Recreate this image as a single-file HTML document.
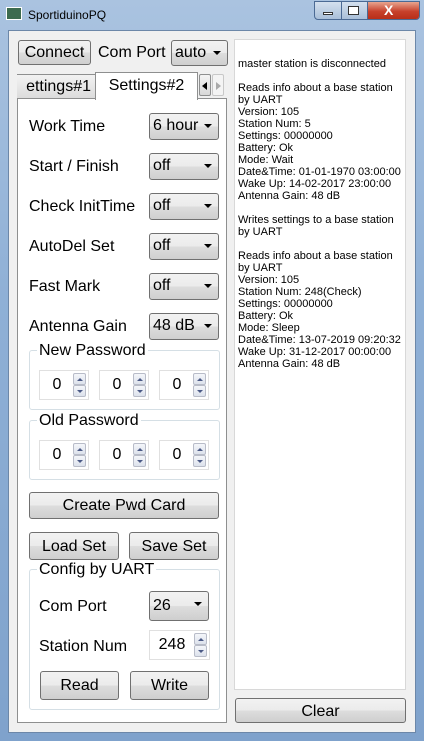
<!DOCTYPE html>
<html><head><style>
*{box-sizing:border-box;margin:0;padding:0}
body{width:424px;height:741px;position:relative;overflow:hidden;font-family:"Liberation Sans",sans-serif;background:linear-gradient(#aac3e0,#8fb0d6 40%,#7fa2cc);}
.a{position:absolute}
.client{left:8px;top:30px;width:408px;height:703px;background:#f0f0f0;border:1px solid #6c87a8}
.btn{position:absolute;border:1px solid #707070;border-radius:3px;background:linear-gradient(#f2f2f2 0,#ebebeb 50%,#dddddd 51%,#cfcfcf);font-size:16px;text-align:center;color:#000}
.lbl{position:absolute;font-size:16px;color:#000}
.cb{position:absolute;border:1px solid #707070;border-radius:3px;background:linear-gradient(#f2f2f2 0,#ebebeb 50%,#dddddd 51%,#cfcfcf);font-size:16px;padding-left:3px;line-height:24px}
.cb:after{content:"";position:absolute;right:6px;top:10px;border-left:4px solid transparent;border-right:4px solid transparent;border-top:4px solid #000}
.grp{position:absolute;border:1px solid #d5dfe5;border-radius:3px}
.gt{position:absolute;font-size:16px;background:#fff;padding:0 2px}
.sp{position:absolute;width:50px;height:30px;background:#fff;border:1px solid #e0e0e0;font-size:16px}
.sp span{position:absolute;left:0;width:34px;text-align:center;top:5px}
.sp i{position:absolute;right:2px;width:13px;height:12px;border:1px solid #b8bcc8;background:linear-gradient(#f4f6fa,#dde2ec);border-radius:2px}
.sp i:after{content:"";position:absolute;left:3px;top:4px;border-left:3px solid transparent;border-right:3px solid transparent}
.sp i.u{top:2px}.sp i.u:after{border-bottom:3px solid #4b5a86}
.sp i.d{top:14px}.sp i.d:after{border-top:3px solid #4b5a86}
.log{font-size:11px;line-height:12px;color:#000;white-space:pre}
</style></head><body>
<div class="a" style="left:6px;top:7px;width:16px;height:13px;background:#3d6b4f;border:1px solid #fff"></div>
<div class="a" style="left:28px;top:8px;font-size:12px;color:#000">SportiduinoPQ</div>
<div class="a" style="left:314px;top:1px;width:106px;height:19px;border:1px solid #4b6a94;border-radius:0 0 4px 4px;background:linear-gradient(#d4e0ee,#a9bfd9);overflow:hidden">
<div class="a" style="left:26px;top:0;width:1px;height:19px;background:#4b6a94"></div>
<div class="a" style="left:52px;top:0;width:1px;height:19px;background:#4b6a94"></div>
<div class="a" style="left:53px;top:0;width:53px;height:19px;background:linear-gradient(#e8a58f,#c7402b 50%,#b42a14)"></div>
<div class="a" style="left:8px;top:10px;width:10px;height:3px;background:#fff;border:1px solid #333"></div>
<div class="a" style="left:33px;top:4px;width:11px;height:9px;border:1px solid #333;background:#fff"></div>
<div class="a" style="left:69px;top:0px;color:#fff;font-weight:bold;font-size:14px">X</div>
</div>
<div class="a client"></div>

<div class="btn" style="left:18px;top:40px;width:73px;height:25px;line-height:23px">Connect</div>
<div class="lbl" style="left:98px;top:44px">Com Port</div>
<div class="cb" style="left:171px;top:40px;width:57px;height:26px">auto</div>

<div class="a" style="left:234px;top:39px;width:172px;height:651px;background:#fff;border:1px solid #d8d8d8"></div>
<div class="a log" style="left:238px;top:58px">master station is disconnected

Reads info about a base station
by UART
Version: 105
Station Num: 5
Settings: 00000000
Battery: Ok
Mode: Wait
Date&amp;Time: 01-01-1970 03:00:00
Wake Up: 14-02-2017 23:00:00
Antenna Gain: 48 dB

Writes settings to a base station
by UART

Reads info about a base station
by UART
Version: 105
Station Num: 248(Check)
Settings: 00000000
Battery: Ok
Mode: Sleep
Date&amp;Time: 13-07-2019 09:20:32
Wake Up: 31-12-2017 00:00:00
Antenna Gain: 48 dB</div>
<div class="btn" style="left:235px;top:698px;width:171px;height:25px;line-height:25px">Clear</div>

<!-- tabs -->
<div class="a" style="left:17px;top:98px;width:210px;height:625px;background:#fff;border:1px solid #8e8f8f"></div>
<div class="a" style="left:17px;top:74px;width:79px;height:25px;border:1px solid #8e8f8f;border-left:none;background:linear-gradient(#f2f2f2,#dcdcdc);font-size:16px;line-height:24px;overflow:hidden;text-align:right;padding-right:4px">ettings#1</div>
<div class="a" style="left:95px;top:72px;width:103px;height:28px;border:1px solid #8e8f8f;border-bottom:none;background:#fff;font-size:16px;text-align:center;line-height:26px">Settings#2</div>
<div class="a" style="left:199px;top:74px;width:12px;height:22px;border:1px solid #8e8f8f;border-radius:2px;background:linear-gradient(#f4f4f4,#d8d8d8)"><div class="a" style="left:2px;top:7px;border-top:4px solid transparent;border-bottom:4px solid transparent;border-right:5px solid #000"></div></div>
<div class="a" style="left:212px;top:74px;width:12px;height:22px;border:1px solid #c8c8c8;border-radius:2px;background:#f4f4f4"><div class="a" style="left:3px;top:7px;border-top:4px solid transparent;border-bottom:4px solid transparent;border-left:5px solid #aaa"></div></div>

<div class="lbl" style="left:29px;top:118px">Work Time</div><div class="cb" style="left:149px;top:113px;width:70px;height:27px">6 hour</div>
<div class="lbl" style="left:29px;top:158px">Start / Finish</div><div class="cb" style="left:149px;top:153px;width:70px;height:27px">off</div>
<div class="lbl" style="left:29px;top:198px">Check InitTime</div><div class="cb" style="left:149px;top:193px;width:70px;height:27px">off</div>
<div class="lbl" style="left:29px;top:238px">AutoDel Set</div><div class="cb" style="left:149px;top:233px;width:70px;height:27px">off</div>
<div class="lbl" style="left:29px;top:278px">Fast Mark</div><div class="cb" style="left:149px;top:273px;width:70px;height:27px">off</div>
<div class="lbl" style="left:29px;top:318px">Antenna Gain</div><div class="cb" style="left:149px;top:313px;width:70px;height:27px">48 dB</div>

<div class="grp" style="left:29px;top:350px;width:191px;height:60px"></div>
<div class="gt" style="left:37px;top:342px">New Password</div>
<div class="sp" style="left:39px;top:370px"><span>0</span><i class="u"></i><i class="d"></i></div>
<div class="sp" style="left:99px;top:370px"><span>0</span><i class="u"></i><i class="d"></i></div>
<div class="sp" style="left:159px;top:370px"><span>0</span><i class="u"></i><i class="d"></i></div>
<div class="grp" style="left:29px;top:420px;width:191px;height:60px"></div>
<div class="gt" style="left:37px;top:412px">Old Password</div>
<div class="sp" style="left:39px;top:440px"><span>0</span><i class="u"></i><i class="d"></i></div>
<div class="sp" style="left:99px;top:440px"><span>0</span><i class="u"></i><i class="d"></i></div>
<div class="sp" style="left:159px;top:440px"><span>0</span><i class="u"></i><i class="d"></i></div>

<div class="btn" style="left:29px;top:492px;width:190px;height:27px;line-height:26px">Create Pwd Card</div>
<div class="btn" style="left:29px;top:532px;width:90px;height:28px;line-height:27px">Load Set</div>
<div class="btn" style="left:129px;top:532px;width:90px;height:28px;line-height:27px">Save Set</div>

<div class="grp" style="left:29px;top:569px;width:191px;height:141px"></div>
<div class="gt" style="left:37px;top:561px">Config by UART</div>
<div class="lbl" style="left:39px;top:598px">Com Port</div><div class="cb" style="left:149px;top:591px;width:60px;height:30px;line-height:28px">26</div>
<div class="lbl" style="left:39px;top:638px">Station Num</div>
<div class="sp" style="left:149px;top:630px;width:61px"><span style="width:44px">248</span><i class="u"></i><i class="d"></i></div>
<div class="btn" style="left:40px;top:671px;width:79px;height:29px;line-height:28px">Read</div>
<div class="btn" style="left:130px;top:671px;width:79px;height:29px;line-height:28px">Write</div>
</body></html>
